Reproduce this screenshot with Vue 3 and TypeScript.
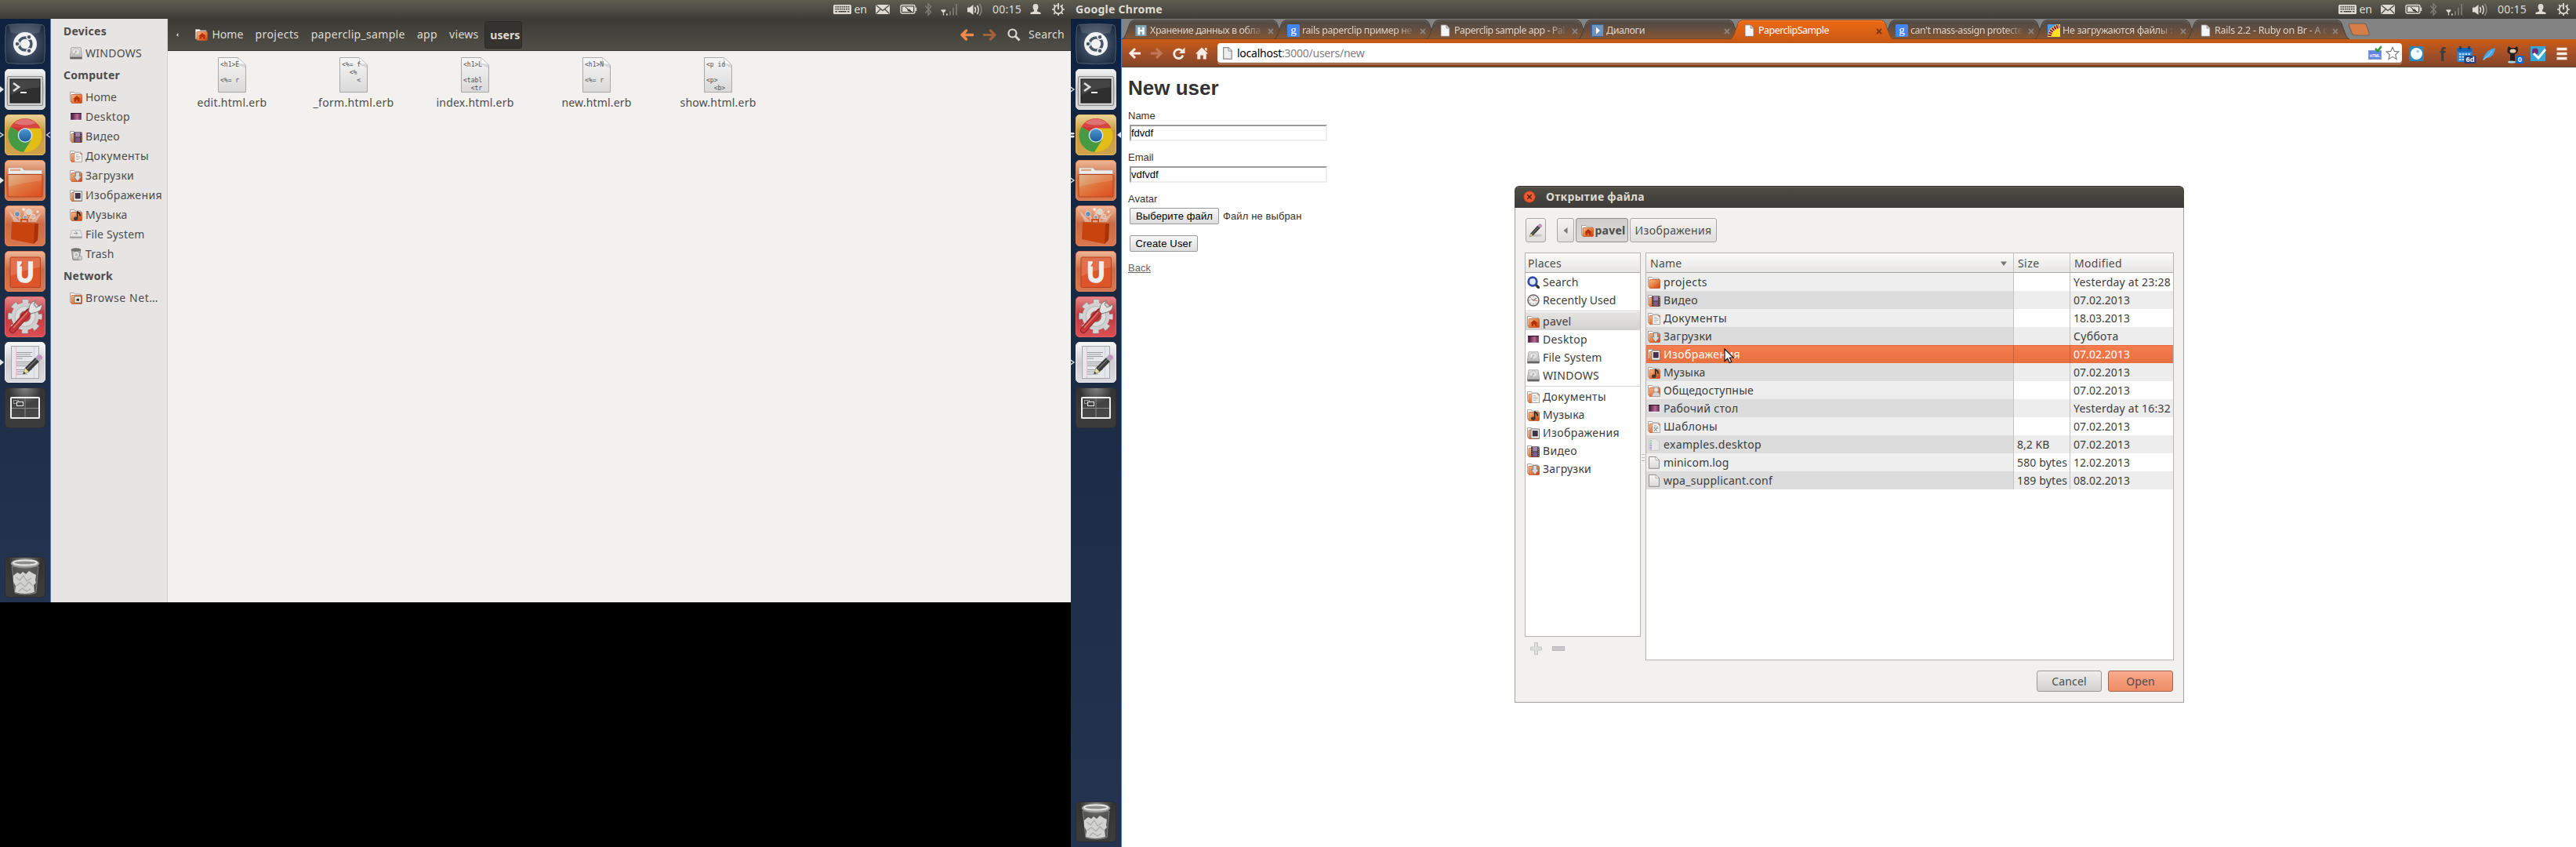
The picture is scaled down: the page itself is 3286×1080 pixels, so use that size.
<script setup lang="ts">
interface Fit { t: string; w: number }
interface Place extends Fit { icon: string; sel?: boolean }
interface FileRow extends Fit { icon: string; size: string; sw: number; mod: string; mw: number; sel?: boolean }

/* Spreads a label's letters so that it takes up the given width. */
function fit(el: HTMLElement, width: number) {
  el.style.letterSpacing = '0px'
  const natural = el.getBoundingClientRect().width
  const count = (el.textContent ?? '').length
  if (count) el.style.letterSpacing = `${((width - natural) / count).toFixed(3)}px`
}
const vFit = {
  mounted: (el: HTMLElement, b: { value: number }) => fit(el, b.value),
}

const launcher = [
  { icon: 'l-dash', left: ['', ''] },
  { icon: 'l-term', left: ['p-full', 'p-open'] },
  { icon: 'l-chrome', left: ['p-open', 'p-two'], right: ['p-ropen', 'p-rfull'] },
  { icon: 'l-files', left: ['p-full', 'p-open'] },
  { icon: 'l-shop', left: ['', ''] },
  { icon: 'l-one', left: ['', ''] },
  { icon: 'l-gear', left: ['', ''] },
  { icon: 'l-edit', left: ['p-full', 'p-open'] },
  { icon: 'l-work', left: ['', ''] },
]

const sidebar: { head: Fit; items: Place[] }[] = [
  { head: { t: 'Devices', w: 55 }, items: [{ t: 'WINDOWS', w: 72, icon: 'disk' }] },
  {
    head: { t: 'Computer', w: 72 },
    items: [
      { t: 'Home', w: 40, icon: 'home' },
      { t: 'Desktop', w: 57, icon: 'desktop' },
      { t: 'Видео', w: 44, icon: 'video' },
      { t: 'Документы', w: 81, icon: 'docs' },
      { t: 'Загрузки', w: 62, icon: 'down' },
      { t: 'Изображения', w: 98, icon: 'pics' },
      { t: 'Музыка', w: 53.5, icon: 'music' },
      { t: 'File System', w: 75.5, icon: 'drive' },
      { t: 'Trash', w: 36.5, icon: 'trash' },
    ],
  },
  { head: { t: 'Network', w: 63 }, items: [{ t: 'Browse Net…', w: 93, icon: 'net' }] },
]

const crumbs: Fit[] = [
  { t: 'projects', w: 56 },
  { t: 'paperclip_sample', w: 120 },
  { t: 'app', w: 26 },
  { t: 'views', w: 37.5 },
]

const files = [
  { t: 'edit.html.erb', w: 89, body: '<h1>E\n\n<%= r' },
  { t: '_form.html.erb', w: 103, body: '<%= f\n  <%\n    <' },
  { t: 'index.html.erb', w: 99, body: '<h1>L\n\n<tabl\n  <tr' },
  { t: 'new.html.erb', w: 89, body: '<h1>N\n\n<%= r' },
  { t: 'show.html.erb', w: 97, body: '<p id\n\n<p>\n  <b>' },
]

const tabs = [
  { t: 'Хранение данных в обла', w: 141, icon: 'habr', fade: true },
  { t: 'rails paperclip пример не', w: 140, icon: 'goog', fade: true },
  { t: 'Paperclip sample app - Pal', w: 141, icon: 'page', fade: true },
  { t: 'Диалоги', w: 49, icon: 'play' },
  { t: 'PaperclipSample', w: 90, icon: 'page', active: true },
  { t: "can't mass-assign protecte", w: 143, icon: 'goog', fade: true },
  { t: 'Не загружаются файлы :', w: 140, icon: 'rails', fade: true },
  { t: 'Rails 2.2 - Ruby on Br - A c', w: 144, icon: 'page', fade: true },
]

const places: Place[][] = [
  [
    { t: 'Search', w: 45.5, icon: 'find' },
    { t: 'Recently Used', w: 93.5, icon: 'clock' },
  ],
  [
    { t: 'pavel', w: 36.5, icon: 'home', sel: true },
    { t: 'Desktop', w: 57, icon: 'desktop' },
    { t: 'File System', w: 75.5, icon: 'disk' },
    { t: 'WINDOWS', w: 72, icon: 'disk' },
  ],
  [
    { t: 'Документы', w: 81, icon: 'docs' },
    { t: 'Музыка', w: 53.5, icon: 'music' },
    { t: 'Изображения', w: 98, icon: 'pics' },
    { t: 'Видео', w: 44, icon: 'video' },
    { t: 'Загрузки', w: 62, icon: 'down' },
  ],
]

const row = (icon: string, t: string, w: number, mod: string, mw = 72, size = '', sw = 0, sel = false): FileRow =>
  ({ icon, t, w, mod, mw, size, sw, sel })

const rows: FileRow[] = [
  row('folder', 'projects', 56, 'Yesterday at 23:28', 124),
  row('video', 'Видео', 44, '07.02.2013'),
  row('docs', 'Документы', 81, '18.03.2013'),
  row('down', 'Загрузки', 62, 'Суббота', 57.5),
  row('pics', 'Изображения', 98, '07.02.2013', 72, '', 0, true),
  row('music', 'Музыка', 53.5, '07.02.2013'),
  row('public', 'Общедоступные', 115, '07.02.2013'),
  row('desktop', 'Рабочий стол', 95.5, 'Yesterday at 16:32', 124),
  row('tmpl', 'Шаблоны', 69, '07.02.2013'),
  row('exfile', 'examples.desktop', 125, '07.02.2013', 72, '8,2 KB', 41.5),
  row('file', 'minicom.log', 83.5, '12.02.2013', 72, '580 bytes', 64),
  row('file', 'wpa_supplicant.conf', 139, '08.02.2013', 72, '189 bytes', 64),
]

const screens = [0, 1]
</script>

<template>
  <svg class="defs" width="0" height="0" aria-hidden="true">
    <defs>
      <linearGradient id="gOr" x1="0" y1="0" x2="1" y2="1"><stop offset="0" stop-color="#f3c096" /><stop offset=".5" stop-color="#e8803f" /><stop offset="1" stop-color="#cf3a0d" /></linearGradient>
      <linearGradient id="gTileO" x1="0" y1="0" x2="0" y2="1"><stop offset="0" stop-color="#f0b796" /><stop offset=".45" stop-color="#c96a45" /><stop offset="1" stop-color="#d9784f" /></linearGradient>
      <linearGradient id="gTileY" x1="0" y1="0" x2="0" y2="1"><stop offset="0" stop-color="#ecd49a" /><stop offset=".4" stop-color="#c8993f" /><stop offset="1" stop-color="#d0a34b" /></linearGradient>
      <linearGradient id="gTileW" x1="0" y1="0" x2="0" y2="1"><stop offset="0" stop-color="#f4f4f4" /><stop offset=".5" stop-color="#bdbdbd" /><stop offset="1" stop-color="#dadada" /></linearGradient>
      <linearGradient id="gTileP" x1="0" y1="0" x2="0" y2="1"><stop offset="0" stop-color="#f8f8f9" /><stop offset=".5" stop-color="#d0ced2" /><stop offset="1" stop-color="#dddce0" /></linearGradient>
      <linearGradient id="gTileR" x1="0" y1="0" x2="0" y2="1"><stop offset="0" stop-color="#e8878a" /><stop offset=".45" stop-color="#bb3a40" /><stop offset="1" stop-color="#dd4f53" /></linearGradient>
      <radialGradient id="gTileK" cx=".5" cy="0" r=".75"><stop offset="0" stop-color="#858585" /><stop offset=".55" stop-color="#333" /><stop offset="1" stop-color="#3b3b3b" /></radialGradient>
      <radialGradient id="gDash" cx=".5" cy=".5" r=".62"><stop offset="0" stop-color="#8796a8" /><stop offset=".55" stop-color="#37465b" /><stop offset="1" stop-color="#1c293d" /></radialGradient>
      <linearGradient id="gFolder" x1="0" y1="0" x2="1" y2="1"><stop offset="0" stop-color="#d8a878" /><stop offset=".5" stop-color="#e0733c" /><stop offset="1" stop-color="#de4c20" /></linearGradient>
      <linearGradient id="gMet" x1="0" y1="0" x2="0" y2="1"><stop offset="0" stop-color="#ededed" /><stop offset="1" stop-color="#a9a9a9" /></linearGradient>
      <linearGradient id="gBlue" x1="0" y1="0" x2="0" y2="1"><stop offset="0" stop-color="#4f98cf" /><stop offset="1" stop-color="#1d5c9d" /></linearGradient>
      <linearGradient id="gDesk" x1="0" y1="0" x2="1" y2="0"><stop offset="0" stop-color="#3a1230" /><stop offset=".6" stop-color="#b56a94" /><stop offset="1" stop-color="#5b2648" /></linearGradient>
      <linearGradient id="gPage" x1="0" y1="0" x2="0" y2="1"><stop offset="0" stop-color="#f6f6f6" /><stop offset="1" stop-color="#d9d9d9" /></linearGradient>
      <linearGradient id="gTab" x1="0" y1="0" x2="0" y2="1"><stop offset="0" stop-color="#4d4946" /><stop offset=".35" stop-color="#5d4d43" /><stop offset="1" stop-color="#87552f" /></linearGradient>
      <linearGradient id="gTabA" x1="0" y1="0" x2="0" y2="1"><stop offset="0" stop-color="#ee6a15" /><stop offset="1" stop-color="#ce5b13" /></linearGradient>
    </defs>

    <symbol id="folder" viewBox="0 0 16 16"><path d="M.5 13.5V1.5h5l1 1.5h7.500v10z" fill="#fff" stroke="#a9a29c" /><rect x="2" y="4.500" width="13.500" height="11" rx=".8" fill="url(#gOr)" stroke="#c4562a" stroke-width=".8" /></symbol>
    <symbol id="home" viewBox="0 0 16 16"><use href="#folder" /><path d="M9 6l4.800 4.200h-1.300V13.800H10v-2.300H8v2.300H5.500v-3.600H4.200z" fill="#b5310b" /></symbol>
    <symbol id="video" viewBox="0 0 16 16"><use href="#folder" /><rect x="5" y="2.500" width="10.500" height="13" fill="#2e2a2e" /><rect x="7.300" y="3" width="5.900" height="5.500" fill="#a585ae" /><rect x="7.300" y="9.300" width="5.900" height="5.700" fill="#7e5d8a" /><path d="M6.100 3.500v12M14.400 3.500v12" stroke="#c9c3c9" stroke-width=".9" stroke-dasharray="1.200 1.200" /></symbol>
    <symbol id="docs" viewBox="0 0 16 16"><use href="#folder" /><path d="M6 3.500h6L15.500 7v8.500H6z" fill="#f1f1f0" stroke="#a8a8a8" stroke-width=".9" /><path d="M8 8.500h5.500M8 10.500h5.500M8 12.500h3.500M8 6.500h3" stroke="#aaa" stroke-width=".8" /></symbol>
    <symbol id="down" viewBox="0 0 16 16"><use href="#folder" /><path d="M7.500 3.500h5v5.200h2.700L10 15.300 4.800 8.700h2.700z" fill="#d9d9d9" stroke="#7d7d7d" stroke-width=".9" /></symbol>
    <symbol id="pics" viewBox="0 0 16 16"><use href="#folder" /><rect x="5" y="3" width="10.500" height="12" fill="#f4f4f2" stroke="#777" stroke-width=".9" /><rect x="7.200" y="5.500" width="6" height="6.500" fill="#43324e" stroke="#1e1724" stroke-width=".7" /></symbol>
    <symbol id="music" viewBox="0 0 16 16"><use href="#folder" /><path d="M10 3.500c.2 2 3.800 1.800 3 6" fill="none" stroke="#2b2b2b" stroke-width="1.800" /><path d="M9.700 3.500v9" stroke="#2b2b2b" stroke-width="1.700" /><ellipse cx="7.700" cy="12.800" rx="2.700" ry="2.200" fill="#3a3a3a" /></symbol>
    <symbol id="public" viewBox="0 0 16 16"><use href="#folder" /><circle cx="10.500" cy="7" r="3" fill="#e4e4e2" stroke="#999" stroke-width=".7" /><path d="M5.500 15.500c0-4 2-5.500 5-5.500s5 1.500 5 5.500z" fill="#d5d5d2" stroke="#999" stroke-width=".7" /></symbol>
    <symbol id="tmpl" viewBox="0 0 16 16"><use href="#docs" /><path d="M8 14l5-6M8 9l4 5" stroke="#8f98a8" /></symbol>
    <symbol id="net" viewBox="0 0 16 16"><use href="#folder" /><rect x="6" y="6" width="8.500" height="8" fill="#f2f2ee" stroke="#7b8072" /><path d="M8.500 11.800v-3h3.500v3z" fill="#33332f" /></symbol>
    <symbol id="desktop" viewBox="0 0 16 16"><rect x=".5" y="2.500" width="15" height="10.500" fill="#fff" stroke="#e0dcde" stroke-width=".6" /><rect x="1.200" y="3.200" width="13.600" height="8.600" fill="url(#gDesk)" /><path d="M1.200 3.600h13.600" stroke="#2a0f22" /></symbol>
    <symbol id="disk" viewBox="0 0 16 16"><path d="M2 .8h12l1.500 10.500v3.900H.5v-3.900z" fill="url(#gMet)" stroke="#8c8c8c" stroke-width=".7" /><ellipse cx="8" cy="5.800" rx="5" ry="4" fill="#e3e3e3" stroke="#b0b0b0" stroke-width=".7" /><circle cx="8" cy="5.500" r="1" fill="#aaa" /><path d="M5 10l3-4" stroke="#999" /><path d="M.6 13.800h14.800" stroke="#5c5c5c" stroke-width="2" /></symbol>
    <symbol id="drive" viewBox="0 0 16 16"><path d="M2.500 2.500h11l2 7v3.500H.5V9.500z" fill="#e6e6e6" stroke="#b2b2b2" stroke-width=".8" /><path d="M.6 11.500h14.800" stroke="#8d8d8d" stroke-width="1.500" /><path d="M5 6.500h5l-3-2.500M10 6.500L8 8.500" fill="none" stroke="#9c9c9c" /></symbol>
    <symbol id="trash" viewBox="0 0 16 16"><path d="M2.500 3h11l-1.300 12.500H4z" fill="#b9bbb9" stroke="#777" stroke-width=".9" /><ellipse cx="8" cy="2.500" rx="6" ry="1.800" fill="#747674" stroke="#5c5e5c" stroke-width=".7" /><path d="M6 7l2.500-1.500L11 8l-1 3.500H6z" fill="none" stroke="#ecedec" stroke-width="1.300" /><rect x="10.500" y="10.500" width="5" height="5" rx="1" fill="#ccc" stroke="#888" stroke-width=".6" /></symbol>
    <symbol id="find" viewBox="0 0 16 16"><path d="M10.500 10.500l4 4" stroke="#333" stroke-width="3.200" stroke-linecap="round" /><circle cx="7" cy="7" r="5.300" fill="#dfe8f5" stroke="#2f4da3" stroke-width="2.800" /></symbol>
    <symbol id="clock" viewBox="0 0 16 16"><circle cx="8" cy="8" r="7" fill="#efefed" stroke="#676767" stroke-width="1.600" /><path d="M8 8l4-3M8 8L5.500 6" stroke="#555" /><path d="M8 8l5 .5" stroke="#d66" /><path d="M8 2.500v1.500M8 12v1.500M2.500 8H4M4 4l1 1M4 12l1-1M12 12l-1-1" stroke="#888" /></symbol>
    <symbol id="file" viewBox="0 0 16 16"><path d="M1.500.5h8.700l4.300 4v10.800h-13z" fill="url(#gPage)" stroke="#8e8e8e" /><path d="M10 .7v4h4.300" fill="#fff" stroke="#999" stroke-width=".8" /></symbol>
    <symbol id="exfile" viewBox="0 0 16 16"><path d="M1.500.5h8.700l4.300 4v10.800h-13z" fill="#e7e7e7" stroke="#cacaca" /><path d="M3.800 2v12.500" stroke="#a9c3b1" stroke-width="2.200" stroke-dasharray="2.200 .8" /><path d="M3.800 8v6.500" stroke="#b29ad6" stroke-width="2.200" stroke-dasharray="2.200 .8" /></symbol>
    <symbol id="pencil" viewBox="0 0 16 16"><ellipse cx="9" cy="13.500" rx="6.500" ry="1.600" fill="#bbb" opacity=".7" /><path d="M1 15l1.500-4L5 13.500z" fill="#e9dc8a" stroke="#555" stroke-width=".5" /><path d="M2.300 11L10 2.500 13 5 5 13.500z" fill="#333" /><path d="M3.800 12L11.700 3.500" stroke="#777" /><path d="M10.500 2.500L12 1q1-.7 2 .3t.5 2L13 5z" fill="#d48bc4" stroke="#8a5a80" stroke-width=".5" /></symbol>

    <symbol id="page" viewBox="0 0 16 16"><path d="M2 .8h7l4 4v10.500H2z" fill="#f6f6f6" stroke="#777" stroke-width=".8" /><path d="M9 1v4h4" fill="#ccc" stroke="#888" stroke-width=".8" /></symbol>
    <symbol id="habr" viewBox="0 0 16 16"><rect x=".5" y="1" width="14" height="14" fill="#7ba0b3" /><text x="7.500" y="12.600" text-anchor="middle" font-family="Liberation Sans, sans-serif" font-weight="700" font-size="12.500" fill="#fff" stroke="#fff" stroke-width=".7">H</text></symbol>
    <symbol id="goog" viewBox="0 0 16 16"><rect width="16" height="16" rx="1.500" fill="#4285f4" /><text x="8" y="11.500" text-anchor="middle" font-family="Liberation Serif, serif" font-size="15" fill="#fff">g</text></symbol>
    <symbol id="play" viewBox="0 0 16 16"><rect x=".5" y=".5" width="15" height="15" fill="#6c92bd" stroke="#37689c" /><path d="M6 3.500l5 4.500-5 4.500z" fill="#fff" /></symbol>
    <symbol id="rails" viewBox="0 0 16 16"><path d="M0 0h16v16H0z" fill="#ffe21a" /><path d="M0 0h13Q2 3 0 14z" fill="#4a9af0" /><path d="M0 16Q1 3 16 0v5Q7 6 5 16z" fill="#fff0a0" /><path d="M2.500 15Q4 5 15 2.500" stroke="#8f1515" stroke-width="4.500" stroke-dasharray="2 1" fill="none" /></symbol>

    <symbol id="l-dash" viewBox="0 0 52 52"><path d="M5 1.500Q26-1 47 1.500 50.500 2 50.500 5 53 26 50.500 47 50 50.500 47 50.500 26 53 5 50.500 1.500 50 1.500 47-1 26 1.500 5 2 2 5 1.500z" fill="url(#gDash)" stroke="#4e5c6e" stroke-width="1" /><path d="M5 2Q26 0 47 2l-3 10Q26 15 8 12z" fill="#fff" opacity=".13" /><circle cx="26" cy="26" r="15" fill="#f2f3f4" /><circle cx="26" cy="26" r="8" fill="none" stroke="#4a5768" stroke-width="3.600" /><g fill="#4a5768" stroke="#f2f3f4" stroke-width="1.400"><circle cx="16" cy="26" r="3" /><circle cx="31" cy="17.300" r="3" /><circle cx="31" cy="34.700" r="3" /></g></symbol>
    <symbol id="l-term" viewBox="0 0 52 52"><rect x=".5" y=".5" width="51" height="51" rx="4.500" fill="url(#gTileW)" stroke="#e4e4e4" /><rect x="3.500" y="9.500" width="45" height="37" rx="1.500" fill="#cfcfcf" stroke="#8b8b8b" /><rect x="7" y="13" width="38" height="30" fill="#2f2f2f" stroke="#111" /><path d="M7.500 13.500h37v10Q25 24 7.500 33z" fill="#fff" opacity=".1" /><path d="M11 18l7 5-7 5" fill="none" stroke="#dedede" stroke-width="2.600" /><path d="M20 30h8" stroke="#eee" stroke-width="2" /></symbol>
    <symbol id="l-chrome" viewBox="0 0 52 52"><rect x=".5" y=".5" width="51" height="51" rx="4.500" fill="url(#gTileY)" stroke="#e6bd5c" /><circle cx="26" cy="26.500" r="21.500" fill="#e2bd16" /><path d="M26 26.500L7.400 15.700A21.500 21.500 0 0 1 45.500 17.500H26z" fill="#cb3433" /><path d="M26 26.500L7.400 15.700A21.500 21.500 0 0 0 24 48l10-16z" fill="#459a42" /><path d="M7.400 15.700A21.500 21.500 0 0 1 45 17H27z" fill="#d64a48" opacity=".8" /><path d="M12 11Q26 0 40 11 26 16 12 11z" fill="#fff" opacity=".25" /><circle cx="26" cy="26.500" r="9.300" fill="#e2ebf2" /><circle cx="26" cy="26.500" r="8" fill="url(#gBlue)" /></symbol>
    <symbol id="l-files" viewBox="0 0 52 52"><rect x=".5" y=".5" width="51" height="51" rx="4.500" fill="url(#gTileO)" stroke="#e9935f" /><path d="M4.500 18v-7q0-1 1-1h16q1 0 2 1.500t2 1.500h22V18z" fill="#ececec" stroke="#b9a9a0" stroke-width=".8" /><path d="M7 12.800h13" stroke="#e39a72" stroke-width="2" /><rect x="4" y="18.500" width="44" height="28.500" rx="1" fill="url(#gFolder)" stroke="#b34319" /><path d="M4.500 19h43v7Q24 29 4.500 34z" fill="#fff" opacity=".14" /></symbol>
    <symbol id="l-shop" viewBox="0 0 52 52"><rect x=".5" y=".5" width="51" height="51" rx="4.500" fill="url(#gTileO)" stroke="#e2805c" /><path d="M5 7l14 13L14 4l9 15 3-17 3 17L38 4l-6 16L47 9l-7 12H12z" fill="#fff" opacity=".38" /><g stroke="#efe3dd" stroke-width=".8"><circle cx="16" cy="11" r="3.500" fill="#6d8fae" /><circle cx="31" cy="8" r="3.500" fill="#d8d4d0" /><circle cx="36" cy="14" r="3" fill="#e0b49a" /><circle cx="26" cy="15" r="2.500" fill="#8f9ba5" /><circle cx="24" cy="5" r="1.500" fill="#eee" /><circle cx="42" cy="8" r="1.200" fill="#eee" /></g><path d="M9 21l34 2-1 21-5 5L8 43z" fill="#c8440f" /><path d="M38 23l5 0-1 21-5 5z" fill="#a83208" /><path d="M21 24v-6h8v6" fill="none" stroke="#c8531f" stroke-width="2" /></symbol>
    <symbol id="l-one" viewBox="0 0 52 52"><rect x=".5" y=".5" width="51" height="51" rx="4.500" fill="url(#gTileO)" stroke="#e07f5a" /><rect x="7" y="8" width="38.500" height="38.500" rx="1.500" fill="#de552c" stroke="#b43f1c" /><path d="M7.500 8.500h37.500v12Q25 24 7.500 32z" fill="#fff" opacity=".16" /><text transform="translate(26 40.300) scale(.84 1)" text-anchor="middle" font-family="Liberation Sans, sans-serif" font-weight="700" font-size="37" fill="#eee" stroke="#eee" stroke-width="1.600">U</text><path d="M19 19.500l4.500-6.500v6.500z" fill="#e0663d" /></symbol>
    <symbol id="l-gear" viewBox="0 0 52 52"><rect x=".5" y=".5" width="51" height="51" rx="4.500" fill="url(#gTileR)" stroke="#e26266" /><circle cx="26" cy="25.500" r="19" fill="none" stroke="#8d8d8d" stroke-width="6" stroke-dasharray="8.200 6.720" stroke-dashoffset="4.100" /><circle cx="26" cy="25.500" r="18.800" fill="none" stroke="#d3d3d3" stroke-width="5.200" stroke-dasharray="7.200 7.566" stroke-dashoffset="3.600" /><circle cx="26" cy="25.500" r="17.500" fill="#d0d0d0" /><circle cx="26" cy="25.500" r="13" fill="#dcdcdc" stroke="#b5b5b5" /><circle cx="26" cy="25.500" r="7" fill="#c43a40" stroke="#9b9b9b" /><path d="M10 43L31 19" stroke="#8f1f25" stroke-width="8" stroke-linecap="round" /><path d="M10 43L30.500 20" stroke="#c4373a" stroke-width="6" stroke-linecap="round" /><path d="M11 40L29 20" stroke="#e08070" stroke-width="1.200" /><path d="M31 15q1-8 8.500-9.500L37 10l3 4 5-2 2.500-3q1 9-7 11-4 1-7 2l-3-3z" fill="#e3e3e3" stroke="#777" /></symbol>
    <symbol id="l-edit" viewBox="0 0 52 52"><rect x=".5" y=".5" width="51" height="51" rx="4.500" fill="url(#gTileP)" stroke="#eee" /><rect x="8.500" y="5.500" width="35" height="41" fill="#e6e7ea" stroke="#a6a6a8" /><path d="M14.500 6v40" stroke="#e6b9b9" stroke-width=".8" /><path d="M37.500 6v40" stroke="#c3cde4" stroke-width=".8" /><path d="M15 13.500h20M15 16h18M15 18.500h20M15 21h8M15 25.500h22M15 28h20M15 30.500h18M15 35.500h20M15 38h16M15 41h14" stroke="#9b9ca0" stroke-width="1" /><path d="M23.500 41l2.500-8 5 5z" fill="#e8dd8e" stroke="#666" stroke-width=".5" /><path d="M23.500 41l1-3 2 2z" fill="#222" /><path d="M26 33L39 20l5 5-13 13z" fill="#3a3a3c" /><path d="M28.500 34.500L41 22" stroke="#777" stroke-width="1.300" /><path d="M39 20l2-2 5 5-2 2z" fill="#a9a9ab" /><path d="M41 18l2-2q2-.5 4 1.500t.8 3.700L46 23z" fill="#c691c4" /></symbol>
    <symbol id="l-work" viewBox="0 0 52 52"><rect x=".5" y=".5" width="51" height="51" rx="4.500" fill="url(#gTileK)" stroke="#303030" /><path d="M8 13h36v26H8z" fill="#fff" fill-opacity=".08" /><path d="M26 13v26M8 26.500h36" stroke="#8c8c8c" /><rect x="8" y="13" width="36" height="26" rx=".5" fill="none" stroke="#f0f0f0" stroke-width="2" /><rect x="11.500" y="16.500" width="6" height="4" fill="none" stroke="#999" /><rect x="15.500" y="18.500" width="8" height="5" fill="#444" stroke="#eee" /></symbol>
    <symbol id="l-trash" viewBox="0 0 52 52"><rect x=".5" y=".5" width="51" height="51" rx="4.500" fill="url(#gTileK)" stroke="#2d2d2d" /><path d="M9 12h34l-3 34q-14 4-27 0z" fill="#7d7d7d" fill-opacity=".45" stroke="#8b8b8b" stroke-width=".8" /><path d="M11 24l5-4 4 2 3-3 4 3 4-4 5 3 4 2-1 7 1 3-3 3 1 9q-12 4-25 0l1-8-3-5z" fill="#d2d2d0" /><path d="M14 26l5 4 5-6 4 7 6-4M15 37l5-4 6 5 5-6 5 5M18 44l4-4 6 4 5-3" fill="none" stroke="#aaaaa8" stroke-width="1.200" /><ellipse cx="26" cy="8.500" rx="18" ry="5.500" fill="#a5a5a3" stroke="#8a8a88" /><ellipse cx="26" cy="7.500" rx="15" ry="3" fill="#8c8c8a" stroke="#e8e8e6" stroke-width="1.800" /></symbol>

    <symbol id="p-full" viewBox="0 0 6 10"><path d="M0 1l5 4-5 4z" fill="#e2e4e8" /></symbol>
    <symbol id="p-open" viewBox="0 0 6 10"><path d="M-1 1.700L4 5l-5 3.300" fill="none" stroke="#d5dae0" stroke-width="1.300" /></symbol>
    <symbol id="p-two" viewBox="0 0 6 10"><path d="M0 2h3.500l1.500 1.500L3.500 4.500H0zM0 5.700h3.500L5 7 3.500 8.400H0z" fill="#e2e4e8" /></symbol>
    <symbol id="p-rfull" viewBox="0 0 6 10"><path d="M6 1L1 5l5 4z" fill="#e2e4e8" /></symbol>
    <symbol id="p-ropen" viewBox="0 0 6 10"><path d="M6 1.700L1.500 5 6 8.300" fill="none" stroke="#d5dae0" stroke-width="1.300" /></symbol>

    <symbol id="indicators" viewBox="0 0 300 24">
      <rect x="0" y="6" width="23" height="12" rx="1.500" fill="#dfdbd2" />
      <path d="M2.500 8.700h18M2.500 11.700h18" stroke="#474640" stroke-width="1.700" stroke-dasharray="1.800 .9" /><path d="M2.500 14.800h2.500M6.500 14.800h10M18 14.800h2.500" stroke="#474640" stroke-width="1.500" />
      <rect x="54" y="6" width="18" height="12" fill="#dfdbd2" /><path d="M54.500 6.500l8.500 7 8.500-7M54.500 17.500l6-6M71.500 17.500l-6-6" fill="none" stroke="#474640" stroke-width="1.200" />
      <rect x="86" y="6.500" width="18" height="10.500" rx="2" fill="none" stroke="#dfdbd2" stroke-width="1.400" /><path d="M88 8.500h14v6.500H88z" fill="#dfdbd2" /><path d="M104.500 9.500h1.700v4.500h-1.700" fill="#dfdbd2" /><path d="M92 9l3 3h2l3 3-5-1.500v-2z" fill="#33322d" stroke="#33322d" stroke-width=".8" />
      <path d="M117.500 7.500l7 8-3.500 3.500V5l3.500 3.500-7 8" fill="none" stroke="#817e76" stroke-width="1.400" />
      <path d="M137.500 13h6M140.500 13v6.500M138 13l2.500 3 2.500-3" fill="none" stroke="#dfdbd2" stroke-width="1.300" /><path d="M144 17.500h1.800v2H144z" fill="#dfdbd2" /><path d="M149 14v5.500M153 9.500v10M157 5v14.500" stroke="#77746c" stroke-width="2" />
      <path d="M171 9.500h3l4.500-3.500v13l-4.500-3.500h-3z" fill="#dfdbd2" /><path d="M180.500 9q2 3.500 0 7M183.500 7q3.500 5.500 0 11" fill="none" stroke="#dfdbd2" stroke-width="1.600" /><path d="M186.500 5q5 7.500 0 15" fill="none" stroke="#8d8a81" stroke-width="1.500" />
      <path d="M257 5q3.500 0 3.500 4 0 2-1.500 4v1.500l4.500 1.500V18h-13v-2l4.500-1.500V13q-1.500-2-1.500-4 0-4 3.500-4z" fill="#dfdbd2" transform="translate(1 0)" />
      <circle cx="287" cy="12" r="5.300" fill="none" stroke="#dfdbd2" stroke-width="1.800" stroke-dasharray="29.100 4.200" stroke-dashoffset="-27.050" /><path d="M287 4v8" stroke="#dfdbd2" stroke-width="1.900" /><path d="M292.500 12h2.500M279 12h2.500M287 17.500V20M291 16l1.800 1.800M283 16l-1.800 1.800M291 8l1.800-1.800M283 8l-1.800-1.800" stroke="#dfdbd2" stroke-width="1.700" />
    </symbol>
  </svg>

  <div class="root">
    <div v-for="s in screens" :key="s" :class="['screen', s ? 'big' : 'small']">
      <div class="panel">
        <span v-if="s" v-fit="111" class="bold app">Google Chrome</span>
        <div class="ind">
          <svg width="300" height="24"><use href="#indicators" /></svg>
          <span v-fit="16.5" class="lang">en</span>
          <span v-fit="37" class="time">00:15</span>
        </div>
      </div>

      <div class="desk">
        <nav class="launcher">
          <div v-for="l in launcher" :key="l.icon" class="slot">
            <svg class="pip" width="6" height="10"><use v-if="l.left[s]" :href="'#' + l.left[s]" /></svg>
            <svg width="52" height="52"><use :href="'#' + l.icon" /></svg>
            <svg class="pip" width="6" height="10"><use v-if="l.right" :href="'#' + l.right[s]" /></svg>
          </div>
          <div class="slot last">
            <svg class="pip" width="6" height="10" /><svg width="52" height="52"><use href="#l-trash" /></svg>
          </div>
        </nav>

        <template v-if="!s">
          <aside class="side">
            <template v-for="g in sidebar" :key="g.head.t">
              <div class="shead bold"><span v-fit="g.head.w">{{ g.head.t }}</span></div>
              <div v-for="i in g.items" :key="i.t" class="sitem">
                <svg width="16" height="16"><use :href="'#' + i.icon" /></svg><span v-fit="i.w">{{ i.t }}</span>
              </div>
            </template>
          </aside>
          <main class="naut">
            <div class="ntool">
              <svg class="tri" width="3" height="5"><path d="M2.300 0v5L0 2.500z" fill="#dfdbd2" /></svg>
              <svg class="nhome" width="16" height="16"><use href="#home" /></svg>
              <span v-fit="41" class="first">Home</span>
              <span v-for="c in crumbs" :key="c.t" class="crumb"><span v-fit="c.w">{{ c.t }}</span></span>
              <span class="cur bold"><span v-fit="38">users</span></span>
              <svg class="nav" width="18" height="15" viewBox="0 0 18 15"><path d="M17 7.500H3M8.500 2L3 7.500 8.500 13" fill="none" stroke="#f28a4b" stroke-width="3.400" stroke-linecap="round" stroke-linejoin="round" /></svg>
              <svg class="nav2" width="18" height="15" viewBox="0 0 18 15"><path d="M1.500 7.500H15M9.500 2L15 7.500 9.500 13" fill="none" stroke="#a4623c" stroke-width="3.200" stroke-linecap="round" stroke-linejoin="round" /></svg>
              <svg class="mag" width="17" height="17" viewBox="0 0 17 17"><circle cx="6.500" cy="6.500" r="5" fill="none" stroke="#dfdbd2" stroke-width="2.200" /><path d="M10.500 10.500l5 5" stroke="#dfdbd2" stroke-width="2.800" /></svg>
              <span v-fit="46">Search</span>
            </div>
            <div class="grid">
              <div v-for="f in files" :key="f.t" class="fcell">
                <div class="thumb">
                  <svg width="36" height="46" viewBox="0 0 36 46"><path d="M.5.500h25l10 9.500v34.500H.5z" fill="url(#gPage)" stroke="#a9a9a9" /><path d="M25.500.500q1 6-1 8 5-.5 11 1.500z" fill="#fff" stroke="#c4c4c4" stroke-width=".8" /><path d="M25 9q6-.5 10.500 2v3z" fill="#bbb" opacity=".5" /></svg>
                  <pre>{{ f.body }}</pre>
                </div>
                <span v-fit="f.w">{{ f.t }}</span>
              </div>
            </div>
          </main>
        </template>

        <main v-else class="chrome">
          <div class="tabs">
            <div v-for="t in tabs" :key="t.t" :class="['tab', { on: t.active }]">
              <svg class="shape" width="208" height="26" viewBox="0 0 208 26">
                <path d="M0 26Q3 25 5 20L10 6Q12 1.500 17 1.500H191Q196 1.500 198 6L203 20Q205 25 208 26z" :fill="t.active ? 'url(#gTabA)' : 'url(#gTab)'" :stroke="t.active ? '#8c4a1c' : '#47403b'" />
                <path d="M10.500 7Q12.500 2.500 17 2.500H191Q195 2.500 197 6" fill="none" :stroke="t.active ? '#fb8b43' : '#77706a'" stroke-opacity=".7" />
                <path v-if="t.active" d="M2 25.500h204" stroke="#cc5b13" stroke-width="1.500" />
              </svg>
              <svg class="fav" width="16" height="16"><use :href="'#' + t.icon" /></svg>
              <span :class="['ttl', { fade: t.fade }]"><span v-fit="t.w">{{ t.t }}</span></span>
              <svg class="x" width="8" height="8" viewBox="0 0 8 8"><path d="M1 .8l6 6.400M7 .8L1 7.200" :stroke="t.active ? '#6b3a1d' : '#8f8580'" stroke-width="1.800" /></svg>
            </div>
            <svg class="newtab" width="28" height="17" viewBox="0 0 28 17"><path d="M3 1h17q3 0 4 3l3 9q1 3-2 3H10q-4 0-5-3L1.500 4Q.5 1 3 1z" fill="#d67d48" stroke="#6e665f" stroke-width="1.200" /></svg>
          </div>
          <div class="ctool">
            <svg class="cnav" width="118" height="20" viewBox="0 0 118 20">
              <path d="M17 10H4M10 4L4 10l6 6" fill="none" stroke="#f8ece5" stroke-width="3" />
              <path d="M30 10h13M37 4l6 6-6 6" fill="none" stroke="#c17a54" stroke-width="3" />
              <path d="M70 7A5.800 5.800 0 1 0 71 12.500" fill="none" stroke="#f8ece5" stroke-width="2.800" /><path d="M73.500 2.500v7.500H66z" fill="#f8ece5" />
              <path d="M94 2.500l8 8h-2.300v7h-4v-5h-3.400v5h-4v-7H86z" fill="#f8ece5" transform="translate(1 0)" /><path d="M99 3h2.500v4.500L99 5z" fill="#f8ece5" />
            </svg>
            <div class="omni">
              <svg width="12" height="16" viewBox="0 0 12 16"><path d="M.700.700h6.500l4 4v10.500H.700z" fill="#eee" stroke="#888" stroke-width="1.200" /><path d="M7 1v4h4" fill="#fff" stroke="#888" /></svg>
              <span v-fit="162.500" class="url"><b>localhost</b>:3000/users/new</span>
              <svg class="html" width="17" height="19" viewBox="0 0 17 19"><rect x=".5" y="6.500" width="16" height="11" fill="#5d86e6" stroke="#8a9fd0" /><text x="8.500" y="14.800" text-anchor="middle" font-family="Liberation Sans, sans-serif" font-weight="700" font-size="6" textLength="13" lengthAdjust="spacingAndGlyphs" fill="#fff">HTML</text><path d="M9 4l3 3 5-6" fill="none" stroke="#2f9a3c" stroke-width="2.600" /></svg>
              <svg width="18" height="18" viewBox="0 0 18 18"><path d="M9 1.200l2.300 5.200 5.700.5-4.300 3.800 1.300 5.700L9 13.400l-5 3 1.300-5.700L1 6.900l5.700-.5z" fill="#fff" stroke="#777" stroke-width="1.100" /></svg>
            </div>
            <svg class="exts" width="206" height="24" viewBox="0 0 206 24">
              <rect x="1" y="2" width="19" height="19" rx="2.500" fill="#2f86b8" /><circle cx="10.500" cy="11.500" r="7.500" fill="#f5fafc" /><circle cx="12.200" cy="8.500" r="1.800" fill="#9fc8de" />
              <text x="43.500" y="20.500" text-anchor="middle" font-family="Liberation Sans, sans-serif" font-weight="700" font-size="24" fill="#413f3d">f</text>
              <rect x="62.500" y="4" width="19" height="18" rx="1" fill="#2d86da" /><path d="M62.500 4h19v5h-19z" fill="#1764b3" /><path d="M66.500 2v4M77.500 2v4" stroke="#11365e" stroke-width="2.200" /><path d="M65 12h14M65 15.500h6M65 19h6" stroke="#c3e0fa" stroke-width="2.200" stroke-dasharray="2.500 1.300" /><rect x="71.500" y="14" width="15" height="10" rx="1" fill="#24407a" /><text x="79" y="22.400" text-anchor="middle" font-family="Liberation Sans, sans-serif" font-weight="700" font-size="9.500" fill="#fff">6d</text>
              <path d="M95 20q2-8 7-12 4-3 9-4-1 9-7 12-3 1-5 1l-3 3z" fill="#46a7ea" /><path d="M96 19q6-4 11-11" stroke="#a7dafd" fill="none" />
              <path d="M128 2l3 2h5l3-2q2 5 0 8-1.500 2-3 2v9h-6v-9q-6-2-2-10z" fill="#231f20" /><ellipse cx="133.500" cy="8" rx="4" ry="2.600" fill="#e8c7ab" /><ellipse cx="132" cy="22" rx="5" ry="1.600" fill="#a6d4e4" /><rect x="137" y="14" width="10.500" height="10" rx="1.500" fill="#0e6bd0" /><text x="142.300" y="22.400" text-anchor="middle" font-family="Liberation Sans, sans-serif" font-weight="700" font-size="9.500" fill="#fff">0</text>
              <rect x="156" y="2" width="19" height="19" fill="#36a5d8" /><circle cx="162" cy="8.500" r="4" fill="#732f6d" /><path d="M160 11l6 6 9-11" fill="none" stroke="#fff" stroke-width="3" />
              <path d="M189.500 5.500h13M189.500 11.500h13M189.500 17.500h13" stroke="#f8ece5" stroke-width="3.600" />
            </svg>
          </div>
          <div class="web">
            <h1>New user</h1>
            <label>Name</label><div class="inp">fdvdf</div>
            <label>Email</label><div class="inp">vdfvdf</div>
            <label>Avatar</label>
            <div class="pick"><span class="btn b1"><span v-fit="98">Выберите файл</span></span><span v-fit="100.500">Файл не выбран</span></div>
            <span class="btn b2"><span v-fit="72">Create User</span></span>
            <a>Back</a>
          </div>
        </main>
      </div>
    </div>

    <section class="dlg">
      <header class="dtitle bold">
        <svg width="16" height="16" viewBox="0 0 16 16"><circle cx="8" cy="8" r="7.300" fill="#ea5a35" stroke="#b23a1a" stroke-width=".9" /><path d="M5.300 5.300l5.400 5.400M10.700 5.300l-5.400 5.400" stroke="#5b2010" stroke-width="1.500" /></svg>
        <span v-fit="126">Открытие файла</span>
      </header>
      <div class="dbody">
        <div class="path">
          <span class="gbtn pen"><svg width="18" height="18"><use href="#pencil" /></svg></span>
          <span class="gbtn prev"><svg width="6" height="8"><path d="M5.500 0v8L.5 4z" fill="#777" /></svg></span>
          <span class="gbtn cur2 bold"><svg width="16" height="16"><use href="#home" /></svg><span v-fit="39">pavel</span></span>
          <span class="gbtn next"><span v-fit="98">Изображения</span></span>
        </div>
        <div class="panes">
          <div class="left">
            <div class="box places">
              <div class="th"><span v-fit="43">Places</span></div>
              <div v-for="(g, gi) in places" :key="gi" class="grp">
                <div v-for="p in g" :key="p.t" :class="['prow', { psel: p.sel }]">
                  <svg width="16" height="16"><use :href="'#' + p.icon" /></svg><span v-fit="p.w">{{ p.t }}</span>
                </div>
              </div>
            </div>
            <svg class="pm" width="50" height="18" viewBox="0 0 50 18"><path d="M9.500 1.500h4v5.500h5v4h-5v5.500h-4v-5.500h-5V7h5z" fill="#dcdedb" stroke="#c3c7c1" /><rect x="32.500" y="6.500" width="15" height="5" fill="#cbc6c9" stroke="#bdb8bb" /></svg>
          </div>
          <div class="grip"><i /><i /><i /></div>
          <div class="box list">
            <div class="tr">
              <div class="th c1"><span v-fit="40.500">Name</span><svg width="8" height="6"><path d="M0 .5h8L4 6z" fill="#777" /></svg></div>
              <div class="th c2"><span v-fit="27.500">Size</span></div>
              <div class="th c3"><span v-fit="61">Modified</span></div>
            </div>
            <div v-for="r in rows" :key="r.t" :class="['tr', 'row', { rsel: r.sel }]">
              <div class="c1"><svg width="16" height="16"><use :href="'#' + r.icon" /></svg><span v-fit="r.w">{{ r.t }}</span></div>
              <div class="c2"><span v-if="r.size" v-fit="r.sw">{{ r.size }}</span></div>
              <div class="c3"><span v-fit="r.mw">{{ r.mod }}</span></div>
            </div>
          </div>
        </div>
        <div class="acts">
          <span class="gbtn act"><span v-fit="44.500">Cancel</span></span>
          <span class="gbtn act open"><span v-fit="36.500">Open</span></span>
        </div>
      </div>
    </section>

    <svg class="cursor" width="14" height="20" viewBox="0 0 14 20"><path d="M1 1v15.500l3.700-3.500 2.500 5.500 2.600-1.200-2.500-5.300H12z" fill="#fff" stroke="#111" stroke-width="1.200" /></svg>
  </div>
</template>

<style>
body { margin: 0; background: #000; overflow: hidden; }
</style>

<style scoped>
.defs { position: absolute; }
.root { position: relative; display: flex; width: 3286px; height: 1080px; background: #000; font: 14px/20px "Noto Sans", "Open Sans", sans-serif; color: #4c4c4c; white-space: nowrap; overflow: hidden; }
.root span { white-space: nowrap; }
svg { display: block; flex: none; }
.bold { font-weight: 700; }
.screen { display: flex; flex-direction: column; flex: none; }
.small { width: 1366px; height: 768px; }
.big { width: 1920px; height: 1080px; }
.panel { height: 24px; flex: none; display: flex; align-items: center; background: linear-gradient(#5f5c50, #55534a 30%, #3d3c38); color: #dfdbd2; box-sizing: border-box; }
.app { margin-left: 6px; }
.ind { position: relative; margin-left: auto; width: 303px; height: 24px; }
.lang, .time { position: absolute; top: 2px; left: 26.500px; }
.time { left: 203px; }
.desk { flex: 1; display: flex; min-height: 0; }
.launcher { width: 64px; flex: none; border-right: 1px solid #4a78b8; background: linear-gradient(#0e2240, #1a2b44 38%, #22344f); display: flex; flex-direction: column; gap: 6px; padding: 6px 0; box-sizing: content-box; height: calc(100% - 12px); }
.slot { display: flex; align-items: center; height: 52px; }
.last { margin-top: auto; }
.side { width: 148px; flex: none; background: #e6e5e3; border-right: 1px solid #d3d1ce; }
.shead { height: 31px; display: flex; align-items: center; padding-left: 16px; }
.sitem { height: 25px; display: flex; align-items: center; gap: 4px; padding-left: 24px; }
.naut { flex: 1; background: #f2f1f0; }
.ntool { height: 40px; border-bottom: 1px solid #3a3935; background: linear-gradient(#3b3a36, #504e46); color: #dfdbd2; display: flex; align-items: center; box-sizing: content-box; padding: 0 8px 0 11px; }
.tri { margin-right: 20.500px; }
.nhome { margin-right: 6px; }
.first { margin-right: 14px; width: 41px; }
.crumb { margin-right: 15.200px; }
.cur { box-sizing: border-box; width: 48px; height: 35px; margin-left: -6px; padding: 7px 0 0 6px; background: #34332f; border: 1px solid #2b2a27; border-radius: 3px; }
.cur { transform: none; }
.crumb + .cur { margin-left: -7.500px; }
.nav { margin-left: auto; margin-right: 12px; }
.nav2 { margin-right: 13px; }
.mag { margin-right: 10px; }
.grid { display: flex; padding: 8px 0 0 4.500px; }
.fcell { width: 155px; display: flex; flex-direction: column; align-items: center; gap: 2px; }
.thumb { position: relative; width: 36px; height: 46px; }
.thumb pre { position: absolute; left: 3px; top: 5px; margin: 0; font: 8px/10px "DejaVu Sans Mono", "Liberation Mono", monospace; color: #555; }

.chrome { flex: 1; background: #fff; display: flex; flex-direction: column; }
.tabs { height: 26px; background: #838383; display: flex; }
.tab { position: relative; width: 208px; height: 26px; margin-right: -14px; flex: none; display: flex; align-items: center; color: #dcd4ce; font-size: 12.500px; }
.tab.on { z-index: 2; color: #fff; }
.shape { position: absolute; left: 0; top: 0; }
.fav { position: relative; margin: 4px 3px 0 17px; }
.ttl { position: relative; width: 144px; margin-top: 3px; overflow: hidden; }
.fade { mask-image: linear-gradient(90deg, #000 84%, rgba(0, 0, 0, 0.15) 98%, transparent 100%); }
.x { position: relative; margin: 5px 0 0 6px; }
.newtab { margin: 5px 0 0 12px; }
.ctool { height: 35px; flex: none; border-bottom: 1px solid #5b4f48; background: linear-gradient(#cb5b12, #a3502a 55%, #834424); display: flex; align-items: flex-start; }
.cnav { margin: 8px 0 0 7px; width: 118px; height: 20px; }
.omni { margin: 5px 0 0 -3px; width: 1511px; height: 25px; background: #fff; border-radius: 4px; box-shadow: 0 1px 0 #6b3413, 0 2px 0 #d9aa90; box-sizing: border-box; padding: 0 3px 0 7px; display: flex; align-items: center; color: #808080; }
.url { margin-left: 6px; }
.url b { font-weight: 400; color: #000; }
.html { margin-left: auto; margin-right: 5px; }
.exts { margin: 7px 0 0 8px; }
.web { padding: 11px 8px; font: 13px/18px "Liberation Sans", Arial, sans-serif; color: #333; display: flex; flex-direction: column; align-items: flex-start; }
h1 { margin: 0 0 12px; font-size: 26px; line-height: 30px; font-weight: 700; }
label { height: 18px; line-height: 18px; margin-bottom: 2px; }
.inp { width: 252px; height: 21px; box-sizing: border-box; border: 2px solid; border-color: #9a9a9a #eee #eee #9a9a9a; color: #000; margin: 0 0 12px 2px; line-height: 17px; }
.pick { display: flex; align-items: center; gap: 5px; margin-bottom: 14px; }
.btn { display: flex; align-items: center; justify-content: center; box-sizing: border-box; height: 21px; border: 1px solid #999; border-radius: 2px; background: linear-gradient(#f8f8f8, #ddd); color: #000; margin-left: 2px; }
.b1 { width: 114px; }
.b2 { width: 87px; margin-bottom: 12px; }
.web a { color: #666; text-decoration: underline; }

.dlg { position: absolute; left: 1932px; top: 237px; width: 854px; height: 659px; display: flex; flex-direction: column; color: #4c4c4c; }
.dtitle { height: 28px; box-sizing: border-box; border-radius: 6px 6px 0 0; border-top: 1px solid #33322e; background: linear-gradient(#65635a, #4d4b44 8%, #3c3b37); color: #dfdbd2; display: flex; align-items: center; padding: 0 0 1px 11px; gap: 13px; }
.dbody { flex: 1; background: #f2f1f0; border: 1px solid #a3a19d; border-top: 0; padding: 13px 12px 0; display: flex; flex-direction: column; box-sizing: border-box; }
.path { display: flex; height: 31px; margin: 0 0 13px 1px; gap: 2px; }
.gbtn { display: flex; align-items: center; justify-content: center; box-sizing: border-box; border: 1px solid #a9a7a3; border-radius: 3px; background: linear-gradient(#f4f3f2, #dfdedd); }
.pen { width: 26px; margin-right: 12px; }
.prev { width: 22px; }
.cur2 { width: 67px; background: linear-gradient(#cfcecc, #dad9d7); border-color: #8e8c88; gap: 2px; padding: 1px 0 0 3px; }
.next { width: 111px; }
.panes { display: flex; }
.left { display: flex; flex-direction: column; }
.box { box-sizing: border-box; border: 1px solid #b7b4b0; background: #fff; color: #3c3c3c; }
.places { width: 148px; height: 490px; }
.th { height: 24px; box-sizing: border-box; display: flex; align-items: center; border-bottom: 1px solid #aaa8a4; background: linear-gradient(#fbfbfa, #e7e6e5); color: #4c4c4c; padding: 1px 0 0 3px; }
.places .th { height: 25px; }
.grp + .grp { border-top: 1px solid #d5d3d1; margin-top: 2px; padding-top: 1px; }
.prow { height: 23px; display: flex; align-items: center; gap: 4px; padding-left: 2px; }
.psel { background: linear-gradient(#e5e4e3, #d3d2d1); }
.pm { margin: 6px 0 0 3px; }
.grip { width: 6px; display: flex; flex-direction: column; gap: 3px; padding: 257px 1px 0; box-sizing: border-box; }
.grip i { height: 1px; background: #bbb; }
.list { width: 674px; height: 520px; }
.tr { display: flex; }
.tr > div { box-sizing: border-box; display: flex; align-items: center; }
.tr .th { height: 25px; }
.c1 { width: 469px; border-right: 1px solid #c4c2bf; padding-left: 2px; gap: 4px; }
.th.c1 { padding: 1px 8px 0 5px; justify-content: space-between; }
.c2 { width: 72px; border-right: 1px solid #c4c2bf; padding-left: 4px; }
.th.c2 { padding-left: 5px; }
.c3 { width: 131px; padding-left: 4px; }
.th.c3 { padding-left: 5px; }
.row { height: 23px; background: #fff; }
.row > div { height: 23px; }
.row .c1 { background: #eee; }
.row:nth-child(odd) { background: #ededed; }
.row:nth-child(odd) .c1 { background: #dcdcdc; }
.row.rsel, .row.rsel:nth-child(odd) { background: linear-gradient(#e8663a 1px, #f47d4e 1px, #e86f3e); color: #fff; }
.row.rsel .c1 { background: none; }
.rsel .c1, .rsel .c2 { border-color: #c9603a; }
.acts { display: flex; justify-content: flex-end; gap: 8px; margin-top: 13px; padding-right: 1px; }
.act { width: 83px; height: 27px; border-color: #9b9995; background: linear-gradient(#efeeed, #d2d1d0); }
.open { background: linear-gradient(#f9ab8d, #ee8c66); border-color: #a2644b; }
.cursor { position: absolute; left: 2199px; top: 444px; }
</style>
